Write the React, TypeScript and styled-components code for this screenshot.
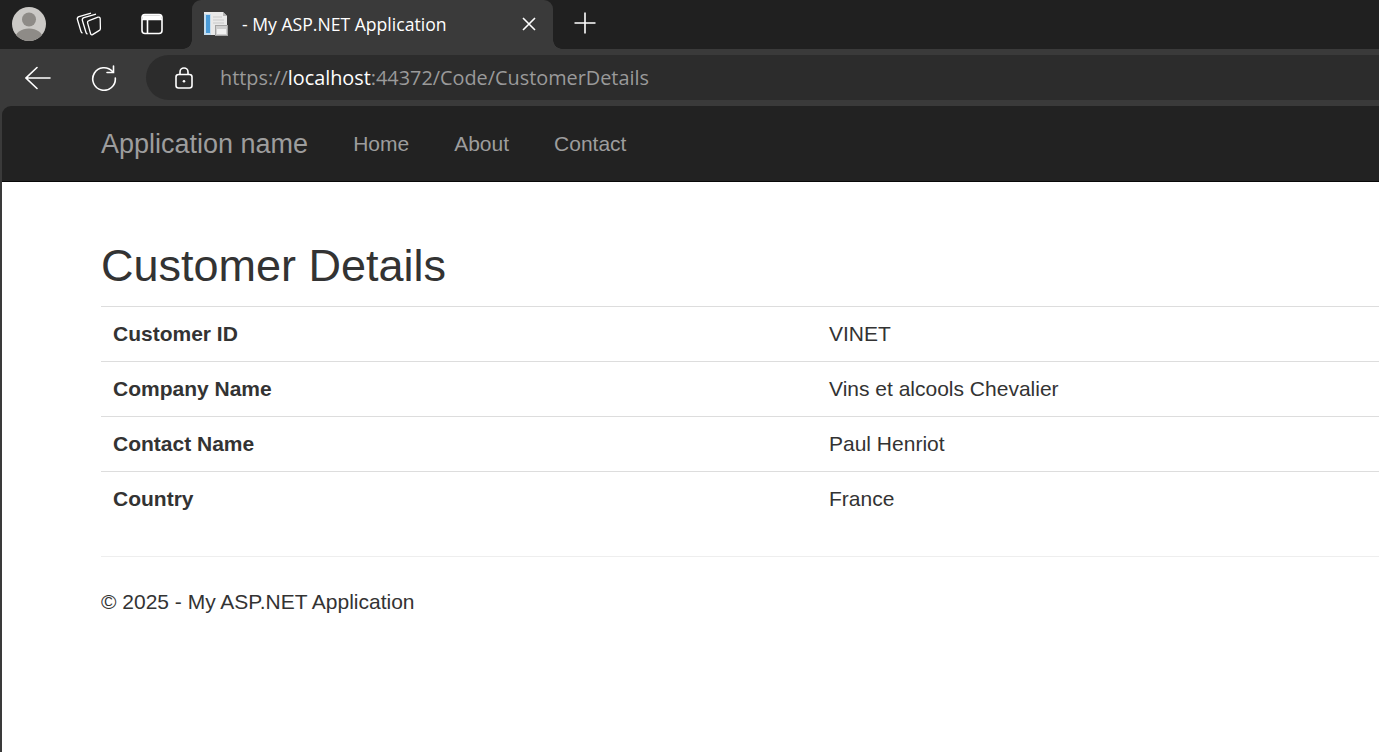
import React from "react";
import styled, { createGlobalStyle } from "styled-components";

const GlobalStyle = createGlobalStyle`
  html, body {
    background: #3a3a3a;
    height: 100%;
    margin: 0;
    overflow: hidden;
  }
  #root {
    height: 100%;
  }
`;

const Window = styled.div`
  display: flex;
  flex-flow: column nowrap;
  height: 752px;
  overflow: hidden;
  width: 1379px;
`;

/* browser chrome */
const TabStrip = styled.div`
  align-items: stretch;
  background: #202020;
  display: flex;
  flex: none;
  height: 49px;
`;
const StripIcons = styled.div`
  align-items: center;
  display: flex;
  padding-bottom: 1px;
  width: 192px;
`;
const StripButton = styled.span<{ $width: number }>`
  align-items: center;
  display: flex;
  justify-content: center;
  width: ${(p) => p.$width}px;
`;
const Tab = styled.div`
  align-items: center;
  background: #3a3a3a;
  border-radius: 9px 9px 0 0;
  box-sizing: border-box;
  color: #fff;
  display: flex;
  font-family: "Open Sans", sans-serif;
  font-size: 17.6px;
  padding: 0 16px 2px 12px;
  position: relative;
  width: 361px;
  &::before,
  &::after {
    bottom: 0;
    content: "";
    height: 9px;
    position: absolute;
    width: 9px;
  }
  &::before {
    background: radial-gradient(circle at 0 0, transparent 8.5px, #3a3a3a 9px);
    left: -9px;
  }
  &::after {
    background: radial-gradient(circle at 100% 0, transparent 8.5px, #3a3a3a 9px);
    right: -9px;
  }
`;
const TabTitle = styled.span`
  flex-grow: 1;
  margin-left: 14px;
  white-space: nowrap;
`;
const NewTab = styled.span`
  align-items: center;
  display: flex;
  margin-left: 21px;
  padding-bottom: 3px;
`;

const Toolbar = styled.div`
  align-items: center;
  background: #3a3a3a;
  display: flex;
  flex: none;
  height: 57px;
`;
const ToolButton = styled.span<{ $width: number }>`
  align-items: center;
  display: flex;
  justify-content: center;
  width: ${(p) => p.$width}px;
`;
const AddressBar = styled.div`
  align-items: center;
  background: #2c2c2c;
  border-radius: 23px 0 0 23px;
  display: flex;
  flex-grow: 1;
  font-family: "Open Sans", sans-serif;
  font-size: 19.85px;
  height: 45px;
  padding-left: 29px;
`;
const Url = styled.span`
  color: #9a9a9a;
  margin-left: 27px;
  white-space: nowrap;
`;
const Host = styled.span`
  color: #fff;
`;

/* page */
const Viewport = styled.div`
  background: #3a3a3a;
  display: flex;
  flex-flow: column nowrap;
  flex-grow: 1;
  padding-left: 2px;
`;
const Navbar = styled.nav`
  align-items: center;
  background: #222;
  border-bottom: 1px solid #080808;
  border-top-left-radius: 9px;
  display: flex;
  flex: none;
  font-family: "Liberation Sans", Arial, sans-serif;
  height: 75px;
  padding-left: 99px;
`;
const Brand = styled.a`
  color: #9d9d9d;
  font-size: 27px;
  margin-right: 45px;
  padding-top: 2px;
`;
const NavLink = styled.a`
  color: #9d9d9d;
  font-size: 21px;
  margin-right: 45px;
`;
const Page = styled.main`
  background: #fff;
  color: #333;
  flex-grow: 1;
  font-family: "Liberation Sans", Arial, sans-serif;
  font-size: 21px;
  padding: 59px 0 0 99px;
`;
const Title = styled.h2`
  font-size: 45px;
  font-weight: 400;
  line-height: 50px;
  margin: 0 0 15px;
`;
const DetailRow = styled.div`
  border-top: 1px solid #ddd;
  display: grid;
  grid-template-columns: 716px 1fr;
  height: 54px;
  line-height: 54px;
  padding-left: 12px;
`;
const Label = styled.span`
  font-weight: 700;
`;
const Rule = styled.hr`
  border: 0;
  border-top: 1px solid #eee;
  margin: 30px 0 0;
`;
const Footer = styled.footer`
  line-height: 28px;
  margin-top: 31px;
`;

const rows = [
  ["Customer ID", "VINET"],
  ["Company Name", "Vins et alcools Chevalier"],
  ["Contact Name", "Paul Henriot"],
  ["Country", "France"],
];

const Avatar = () => (
  <svg width="36" height="36" viewBox="0 0 36 36">
    <defs>
      <clipPath id="avatar">
        <circle cx="18" cy="18" r="17" />
      </clipPath>
    </defs>
    <circle cx="18" cy="18" r="17" fill="#cbc9c6" />
    <g clipPath="url(#avatar)" fill="#8e8b87">
      <circle cx="18" cy="13.5" r="7" />
      <ellipse cx="18" cy="33" rx="14" ry="10.5" />
    </g>
  </svg>
);

const Workspaces = () => (
  <svg width="28" height="28" viewBox="0 0 28 28" fill="none" stroke="#fff" strokeWidth="1.3" strokeLinejoin="round">
    <path d="M16 3.2 L4 6.6 Q1.8 7.4 2.4 9.5 L6 21.5 Q6.4 22.8 7.5 23.2" />
    <path d="M21 4.2 L9 7.6 Q6.8 8.4 7.4 10.5 L11 22.5 Q11.4 23.8 12.5 24.2" />
    <path
      d="M14 10.6 L23 7.2 Q25 6.8 25.2 8.6 L25.4 18.5 Q25.4 20 24 20.6 L17.5 24.6 Q16 25.2 15.6 23.8 L12.5 12.6 Q12.2 11.2 14 10.6 Z"
      fill="#202020"
    />
  </svg>
);

const TabActions = () => (
  <svg width="24" height="24" viewBox="0 0 24 24" fill="none" stroke="#fff" strokeWidth="1.6">
    <rect x="2" y="2.5" width="20" height="19" rx="3" />
    <path d="M2 7.5 H22 M7.5 7.5 V21" />
    <path d="M3 3.5 H21 V7 H3 Z" fill="#fff" strokeWidth="0.6" />
  </svg>
);

const Favicon = () => (
  <svg width="24" height="24" viewBox="0 0 24 24">
    <path d="M0 0 H19 L23 4 V23 H0 Z" fill="#e9e9e9" />
    <path d="M19 0 V4 H23 Z" fill="#b5b5b5" />
    <rect x="0" y="2" width="7" height="21" fill="#c4dcee" />
    <rect x="2" y="3" width="4" height="18" fill="#4a9bd8" />
    <path d="M9 5 H18 M9 8 H20 M9 11 H20" stroke="#c9c9c9" strokeWidth="1" />
    <rect x="11.5" y="13.5" width="12" height="10" fill="#cfcfcf" stroke="#a3a3a3" strokeWidth="1" />
    <rect x="13" y="17" width="9" height="5" fill="#f0f0f0" />
  </svg>
);

const CloseIcon = () => (
  <svg width="16" height="16" viewBox="0 0 16 16" stroke="#fff" strokeWidth="1.6" fill="none">
    <path d="M2 2 L14 14 M14 2 L2 14" />
  </svg>
);

const PlusIcon = () => (
  <svg width="22" height="22" viewBox="0 0 22 22" stroke="#fff" strokeWidth="1.6" fill="none">
    <path d="M11 0.5 V21.5 M0.5 11 H21.5" />
  </svg>
);

const BackIcon = () => (
  <svg width="26" height="24" viewBox="0 0 26 24" stroke="#fff" strokeWidth="1.6" fill="none" strokeLinecap="round">
    <path d="M1 12 H25 M12 1.5 L1 12 L12 22.5" />
  </svg>
);

const ReloadIcon = () => (
  <svg width="26" height="26" viewBox="0 0 26 26" stroke="#fff" strokeWidth="1.6" fill="none" strokeLinecap="round">
    <path d="M21.5 6.5 A11.3 11.3 0 1 0 24.3 13" />
    <path d="M22.5 1 V7.5 H16" />
  </svg>
);

const LockIcon = () => (
  <svg width="18" height="22" viewBox="0 0 18 22" stroke="#fff" strokeWidth="1.6" fill="none">
    <rect x="1" y="7.5" width="16" height="13.5" rx="2.5" />
    <path d="M5 7.5 V5 A4 4 0 0 1 13 5 V7.5" />
    <circle cx="9" cy="14.2" r="1.3" fill="#fff" stroke="none" />
  </svg>
);

const App: React.FC = () => (
  <Window>
    <GlobalStyle />
    <TabStrip>
      <StripIcons>
        <StripButton $width={58}>
          <Avatar />
        </StripButton>
        <StripButton $width={62}>
          <Workspaces />
        </StripButton>
        <StripButton $width={64}>
          <TabActions />
        </StripButton>
      </StripIcons>
      <Tab>
        <Favicon />
        <TabTitle>- My ASP.NET Application</TabTitle>
        <CloseIcon />
      </Tab>
      <NewTab>
        <PlusIcon />
      </NewTab>
    </TabStrip>
    <Toolbar>
      <ToolButton $width={76}>
        <BackIcon />
      </ToolButton>
      <ToolButton $width={56}>
        <ReloadIcon />
      </ToolButton>
      <ToolButton $width={14} />
      <AddressBar>
        <LockIcon />
        <Url>
          https://<Host>localhost</Host>:44372/Code/CustomerDetails
        </Url>
      </AddressBar>
    </Toolbar>
    <Viewport>
      <Navbar>
        <Brand>Application name</Brand>
        <NavLink>Home</NavLink>
        <NavLink>About</NavLink>
        <NavLink>Contact</NavLink>
      </Navbar>
      <Page>
        <Title>Customer Details</Title>
        {rows.map(([label, value]) => (
          <DetailRow key={label}>
            <Label>{label}</Label>
            <span>{value}</span>
          </DetailRow>
        ))}
        <Rule />
        <Footer>© 2025 - My ASP.NET Application</Footer>
      </Page>
    </Viewport>
  </Window>
);

export default App;
